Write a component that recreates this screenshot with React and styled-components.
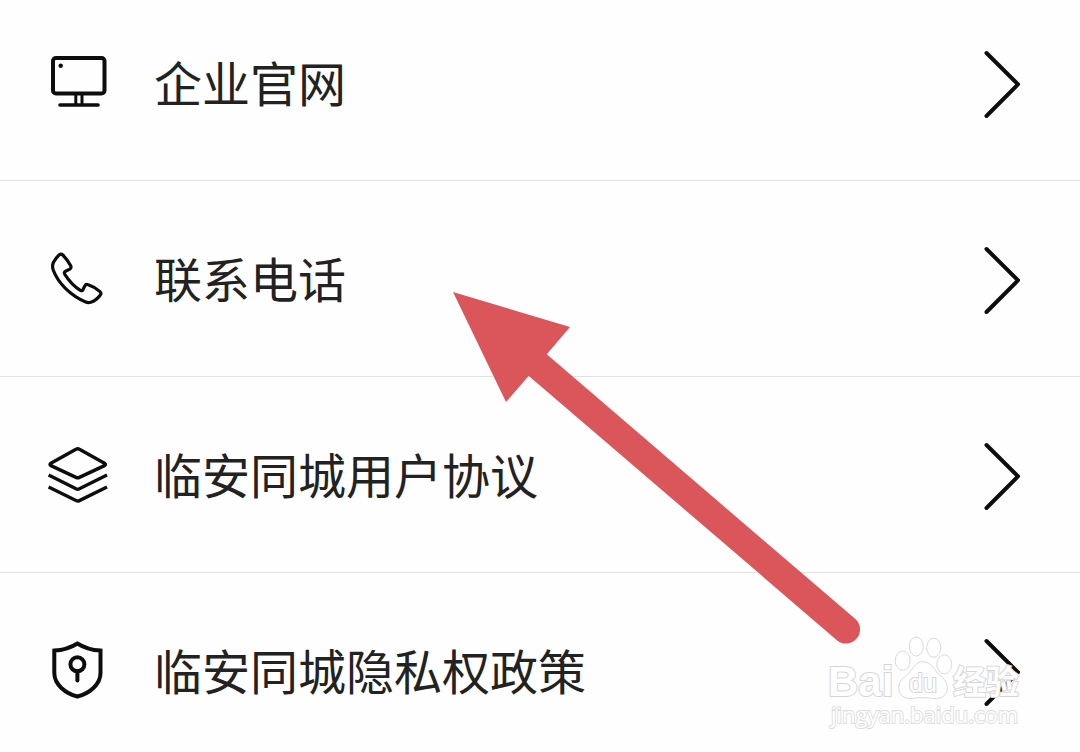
import React from 'react';
import styled, { createGlobalStyle } from 'styled-components';

// Menu rows, each one links to its own page
const items = [
  { label: '企业官网', href: '#website', Icon: MonitorIcon },
  { label: '联系电话', href: '#phone', Icon: PhoneIcon },
  { label: '临安同城用户协议', href: '#agreement', Icon: LayersIcon },
  { label: '临安同城隐私权政策', href: '#privacy', Icon: ShieldIcon },
];

function MonitorIcon() {
  return (
    <RowIcon viewBox="0 0 60 60" aria-hidden="true">
      <rect x="5" y="4" width="51.5" height="35.5" rx="3" />
      <path d="M27.8 40v10M34 40v10" strokeWidth="3" />
      <path d="M12 51h38" strokeWidth="3.6" />
      <circle cx="12.7" cy="11.7" r="2.2" fill="#0d0d0d" stroke="none" />
    </RowIcon>
  );
}

function PhoneIcon() {
  return (
    <RowIcon viewBox="0 0 60 60" aria-hidden="true">
      <path
        strokeWidth="3.2"
        d="M10.8 5.2C12 4 13.6 3.8 14.8 5C18 8.2 20.8 12 22.7 15.8C23.3 17.2 23 18.4 21.8 19.1L17.6 21.2C16.2 22 16 22.9 16.8 24.3C21 30.8 26.5 36.7 32.3 40.3C33.7 41.1 34.6 40.7 35.2 39.3L36.8 35.9C37.5 34.5 38.8 34.2 40.2 34.7C44.8 36.2 48.8 38.6 52 41.6C53.2 42.8 53.2 44 52.2 45.2C49.6 48.6 46.6 51 42.8 52.2C41.1 52.8 39.4 52.7 37.7 52C22.5 45.5 10.3 33.5 5.2 20C4.2 17 4.4 14.6 5.5 12.3C6.9 9.6 8.6 7.2 10.8 5.2Z"
      />
    </RowIcon>
  );
}

function LayersIcon() {
  return (
    <RowIcon viewBox="0 0 60 60" aria-hidden="true">
      <path strokeWidth="3.4" d="M28 3.2Q29.7 2.2 31.4 3.2L56.5 17.2Q58.3 18.4 56.5 19.6L31.4 31.4Q29.7 32.2 28 31.4L2.9 19.6Q1.1 18.4 2.9 17.2Z" />
      <path strokeWidth="3.4" strokeLinecap="butt" d="M.6 29L28 42.8Q29.7 43.6 31.4 42.8L59 29" />
      <path strokeWidth="3.4" strokeLinecap="butt" d="M.6 41L28 54.6Q29.7 55.4 31.4 54.6L59 41" />
    </RowIcon>
  );
}

function ShieldIcon() {
  return (
    <RowIcon viewBox="0 0 60 60" aria-hidden="true">
      <path strokeLinejoin="miter" d="M29.4 1.5C22.5 5.9 14.5 8.2 6.3 8.6V31C6.3 42.5 17.5 51.5 29.4 54.5C41.3 51.5 52.5 42.5 52.5 31V8.6C44.3 8.2 36.3 5.9 29.4 1.5Z" />
      <circle cx="29.4" cy="22.3" r="7" />
      <path d="M29.4 29.5V38.5" />
    </RowIcon>
  );
}

const Watermark = () => (
  <Mark viewBox="0 0 200 100" aria-label="Baidu 经验 jingyan.baidu.com">
    <MarkText x="3" y="64" fontSize="42" fontWeight="bold">Bai</MarkText>
    <MarkShape cx="77.7" cy="28.7" rx="7.5" ry="9.5" />
    <MarkShape cx="91.3" cy="14.5" rx="7" ry="9.5" />
    <MarkShape cx="108.7" cy="15.7" rx="7" ry="9.5" />
    <MarkShape cx="119.3" cy="32.3" rx="7.5" ry="9.5" />
    <path
      d="M98 29.7C91 29.7 88.5 36 84 41C79 46 73.7 48 73.7 56C73.7 63 80 67.5 87.5 66.5C95 65.3 101 65.3 108.5 66.5C116 67.5 122.3 63 122.3 56C122.3 48 117 46 112.5 41C108 36 105.5 29.7 98 29.7Z"
      fill="#fff"
      stroke="#dadada"
    />
    <MarkText x="84" y="60" fontSize="25">du</MarkText>
    <MarkText x="128" y="62" fontSize="33" fontWeight="bold">经验</MarkText>
    <UrlText x="6" y="91">jingyan.baidu.com</UrlText>
  </Mark>
);

const App = () => {
  return (
    <Page>
      <GlobalStyle />
      <nav>
        <List>
          {items.map(({ label, href, Icon }) => (
            <Item key={label}>
              <RowLink href={href}>
                <Icon />
                <Label>{label}</Label>
                <Chevron viewBox="0 0 36 68" aria-hidden="true">
                  <path d="M2.5 3L34 34.3L2.5 66" />
                </Chevron>
              </RowLink>
            </Item>
          ))}
        </List>
      </nav>
      {/* red arrow pointing at the phone row */}
      <Pointer viewBox="0 0 408 354" aria-hidden="true">
        <path d="M0 0L117 35L94 62L76 83.5L53 110Z" fill="#da565b" />
        <path d="M80 69L393 337.5" stroke="#da565b" strokeWidth="28" strokeLinecap="round" />
      </Pointer>
      <Watermark />
    </Page>
  );
};

// Styles
const GlobalStyle = createGlobalStyle`
  body {
    margin: 0;
    background: #fefefe;
  }
`;

const Page = styled.main`
  position: relative;
  overflow: hidden;
  font-family: "Noto Sans CJK SC", sans-serif;
  color: #222;
`;

const List = styled.ul`
  margin: 0;
  padding: 0;
  list-style: none;
`;

const RowLink = styled.a`
  display: flex;
  align-items: center;
  padding: 65px 60px 62px 48px;
  color: inherit;
  text-decoration: none;
`;

const Item = styled.li`
  border-bottom: 1px solid #e2e2e2;

  &:first-child ${RowLink} {
    padding-top: 50px;
  }

  &:last-child {
    border-bottom: none;

    ${RowLink} {
      padding-bottom: 46px;
    }
  }
`;

const RowIcon = styled.svg`
  flex: none;
  width: 60px;
  height: 60px;
  overflow: visible;
  fill: none;
  stroke: #0d0d0d;
  stroke-width: 4;
  stroke-linecap: round;
  stroke-linejoin: round;
`;

const Label = styled.span`
  flex: 1;
  margin-left: 46px;
  padding-bottom: 6px;
  font-size: 48px;
  line-height: 62px;
`;

const Chevron = styled.svg`
  flex: none;
  width: 36px;
  height: 68px;
  fill: none;
  stroke: #0d0d0d;
  stroke-width: 4;
  stroke-linecap: round;
`;

const Pointer = styled.svg`
  position: absolute;
  top: 292px;
  left: 453px;
  width: 408px;
  height: 354px;
  fill: none;
`;

const Mark = styled.svg`
  position: absolute;
  right: 55px;
  bottom: 20px;
  width: 200px;
  height: 100px;
`;

// the stroke goes under the fill, so only a thin outline shows
const MarkText = styled.text`
  font-family: "Liberation Sans", "Noto Sans CJK SC", sans-serif;
  fill: #fff;
  stroke: #d6d6d6;
  stroke-width: 2;
  paint-order: stroke;
`;

const UrlText = styled(MarkText)`
  font-family: "Open Sans", sans-serif;
  font-size: 22px;
  stroke: #dedede;
`;

const MarkShape = styled.ellipse`
  fill: #fff;
  stroke: #dadada;
`;

export default App;
